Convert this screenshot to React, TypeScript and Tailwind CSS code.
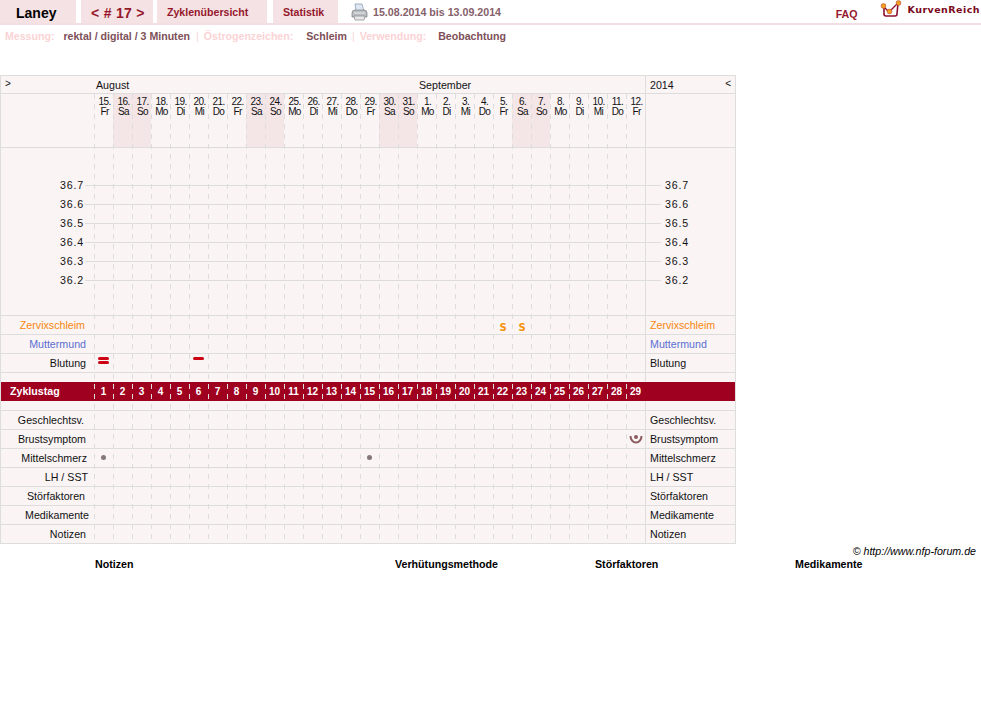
const dayNums = [15, 16, 17, 18, 19, 20, 21, 22, 23, 24, 25, 26, 27, 28, 29, 30, 31, 1, 2, 3, 4, 5, 6, 7, 8, 9, 10, 11, 12];
const weekNames = ['Fr', 'Sa', 'So', 'Mo', 'Di', 'Mi', 'Do'];
const days = dayNums.map((num, i) => ({ num, name: weekNames[i % 7], cycle: i + 1 }));
const temps = ['36.7', '36.6', '36.5', '36.4', '36.3', '36.2'];

function Printer() {
  return (
    <svg width="17" height="18" viewBox="0 0 17 18">
      <path d="M4 1 L11 1 L13 8 L5 8 Z" fill="#dfe8f2" stroke="#8a9db5" strokeWidth="0.8" />
      <path d="M1 10 Q1 7 4 7 L13 7 Q16 7 16 10 L16 14 L1 14 Z" fill="#b9bcc0" stroke="#85888c" strokeWidth="0.8" />
      <path d="M3 13 L14 13 L13 17 L4 17 Z" fill="#e8e8e8" stroke="#8f9296" strokeWidth="0.8" />
      <path d="M3 10 L14 10" stroke="#eceded" strokeWidth="1" />
    </svg>
  );
}

function Logo() {
  return (
    <svg width="22" height="18" viewBox="0 0 22 18">
      <path d="M4 7 L4 14 Q4 16 6 16 L15 16 Q17 16 17 14 L18 3" fill="none" stroke="#8c1030" strokeWidth="1.6" />
      <path d="M3 6 L9 12 L18 3" fill="none" stroke="#8c1030" strokeWidth="1.3" />
      <circle cx="3.5" cy="6" r="2.4" fill="#f5a023" stroke="#b5462a" strokeWidth="0.6" />
      <circle cx="9.5" cy="11.5" r="2.4" fill="#f5a023" stroke="#b5462a" strokeWidth="0.6" />
      <circle cx="18.5" cy="3" r="2.4" fill="#f5a023" stroke="#b5462a" strokeWidth="0.6" />
    </svg>
  );
}

function Spot() {
  return <div className="w-[5px] h-[5px] mt-[6px] rounded-full bg-[#85787a]" />;
}

function Period({ double }: { double?: boolean }) {
  return (
    <div className="flex flex-col items-center gap-[1px] pt-[3px]">
      <div className="w-[11px] h-[3px] rounded-full bg-[#cc0012]" />
      {double && <div className="w-[11px] h-[3px] rounded-full bg-[#cc0012]" />}
    </div>
  );
}

function Slime() {
  return <span className="pl-[1px] font-['DejaVu_Sans',sans-serif] text-[10px] leading-[23px] font-bold text-[#f7920f]">S</span>;
}

function Breast() {
  return (
    <svg width="14" height="12" viewBox="0 0 14 12" className="mt-[4px] ml-[1px]">
      <circle cx="7" cy="3" r="2" fill="#8a5a5e" />
      <path d="M1.5 2 A5.5 6.5 0 0 0 12.5 2" fill="none" stroke="#8a5a5e" strokeWidth="2" />
    </svg>
  );
}

// one table row: side labels plus 29 day cells
function Row({
  label,
  labelClass,
  rightClass,
  marks,
}: {
  label?: string;
  labelClass?: string;
  rightClass?: string;
  marks?: Record<number, React.ReactNode>;
}) {
  return (
    <div className="flex h-[19px] border-b border-[#dddddd]">
      <div className={`w-[93px] text-right leading-[19px] ${labelClass ?? ''}`}>{label}</div>
      {days.map((d) => (
        <div key={d.cycle} className="w-[19px] flex justify-center">
          {marks?.[d.cycle]}
        </div>
      ))}
      <div className={`flex-1 border-l border-[#dddddd] pl-[4px] leading-[19px] ${rightClass ?? ''}`}>{label}</div>
    </div>
  );
}

function Spacer({ className }: { className: string }) {
  return (
    <div className={`flex ${className}`}>
      <div className="w-[93px] shrink-0" />
      <div className="w-[551px] shrink-0" />
      <div className="flex-1 border-l border-[#dddddd]" />
    </div>
  );
}

function TempRow({ value }: { value: string }) {
  return (
    <div className="flex h-[19px] items-center">
      <div className="w-[93px] flex items-center justify-end">
        <span className="tracking-[0.8px] mr-[1px] pb-[2px]">{value}</span>
        <div className="w-[9px] h-px bg-[#dddddd]" />
      </div>
      <div className="w-[551px] h-px bg-[#dddddd]" />
      <div className="flex-1 h-full border-l border-[#dddddd] flex items-center">
        <div className="w-[15px] h-px bg-[#dddddd]" />
        <span className="tracking-[0.8px] ml-[4px] pb-[2px]">{value}</span>
      </div>
    </div>
  );
}

export default function App() {
  return (
    <div className="w-[981px] h-[703px] bg-white text-[10.67px] text-black font-['Liberation_Sans',Arial,sans-serif] overflow-hidden">
      {/* Top bar */}
      <div className="flex h-[25px] border-b-2 border-[#f3dfe2]">
        <div className="w-[76px] bg-[#f4e2e5] pl-[16px] text-[14px] font-bold leading-[27px]">Laney</div>
        <div className="w-[72px] ml-[5px] bg-[#f4e2e5] pl-[10px] text-[14px] font-bold leading-[26px] tracking-[0.3px] text-[#96182c]">{'< # 17 >'}</div>
        <div className="w-[110px] ml-[4px] bg-[#f4e2e5] pl-[10px] text-[10.6px] font-bold leading-[25px] text-[#96182c]">Zyklenübersicht</div>
        <div className="w-[65px] ml-[6px] bg-[#f4e2e5] pl-[10px] text-[10.6px] font-bold leading-[25px] text-[#96182c]">Statistik</div>
        <div className="ml-[13px] pt-[3px]"><Printer /></div>
        <div className="ml-[5px] font-bold leading-[25px] text-[#86606a]">15.08.2014 bis 13.09.2014</div>
        <div className="ml-auto font-bold leading-[28px] text-[#96182c]">FAQ</div>
        <div className="ml-[22px] w-[22px]"><Logo /></div>
        <div className="ml-[6px] mr-[1px] font-['DejaVu_Sans',sans-serif] text-[9.5px] font-bold leading-[20px] tracking-[0.45px] text-[#7a0a1c]">KurvenReich</div>
      </div>

      {/* Settings line */}
      <div className="flex pl-[5px] h-[50px] pt-[3px] text-[10.6px] font-bold leading-[16px] text-[#7d5058]">
        <span className="text-[#fad3d5]">Messung:</span>
        <span className="ml-[9px]">rektal / digital / 3 Minuten</span>
        <span className="ml-[6px] font-normal text-[#fad3d5]">|</span>
        <span className="ml-[5px] text-[#fad3d5]">Östrogenzeichen:</span>
        <span className="ml-[13px]">Schleim</span>
        <span className="ml-[5px] font-normal text-[#fad3d5]">|</span>
        <span className="ml-[5px] text-[#fad3d5]">Verwendung:</span>
        <span className="ml-[12px]">Beobachtung</span>
      </div>

      {/* Chart table */}
      <div className="relative w-[736px] bg-[#faf4f5] border-x border-t border-[#dddddd] text-[#111111]">
        <div className="flex h-[18px] border-b border-[#dddddd] leading-[19px]">
          <div className="w-[93px] pl-[4px] text-[10px] leading-[16px]">{'>'}</div>
          <div className="w-[323px] pl-[2px]">August</div>
          <div className="w-[228px] pl-[2px]">September</div>
          <div className="flex-1 flex justify-between border-l border-[#dddddd] pl-[4px] pr-[4px]">
            <span>2014</span>
            <span className="text-[10px] leading-[16px]">{'<'}</span>
          </div>
        </div>

        <div className="flex h-[54px] border-b border-[#dddddd]">
          <div className="w-[93px]" />
          {days.map((d) => (
            <div
              key={d.cycle}
              className={`w-[19px] pt-[3px] pl-[2px] text-center text-[10px] leading-[9.5px] tracking-[-0.6px] ${d.name === 'Sa' || d.name === 'So' ? 'bg-[#f4e5e7]' : ''}`}
            >
              <div>{d.num}.</div>
              <div>{d.name}</div>
            </div>
          ))}
          <div className="flex-1 border-l border-[#dddddd]" />
        </div>

        {/* Temperature area */}
        <div className="border-b border-[#dddddd]">
          <Spacer className="h-[28px]" />
          {temps.map((t) => (
            <TempRow key={t} value={t} />
          ))}
          <Spacer className="h-[25px]" />
        </div>

        <Row label="Zervixschleim" labelClass="pr-[9px] text-[#f7870f]" rightClass="text-[#f7870f]" marks={{ 22: <Slime />, 23: <Slime /> }} />
        <Row label="Muttermund" labelClass="pr-[8px] text-[#5a6fd0]" rightClass="text-[#5a6fd0]" />
        <Row label="Blutung" labelClass="pr-[8px]" marks={{ 1: <Period double />, 6: <Period /> }} />
        <Spacer className="h-[9px]" />

        {/* Cycle day bar */}
        <div className="flex h-[19px] bg-[#a00020] text-white font-bold leading-[19px]">
          <div className="w-[93px] pl-[9px]">Zyklustag</div>
          {days.map((d) => (
            <div key={d.cycle} className="w-[19px] text-center text-[10px]">
              {d.cycle}
            </div>
          ))}
          <div className="flex-1" />
        </div>
        <div className="border-b border-[#dddddd]">
          <Spacer className="h-[9px]" />
        </div>

        <Row label="Geschlechtsv." labelClass="pr-[10px]" />
        <Row label="Brustsymptom" labelClass="pr-[8px]" marks={{ 29: <Breast /> }} />
        <Row label="Mittelschmerz" labelClass="pr-[7px]" marks={{ 1: <Spot />, 15: <Spot /> }} />
        <Row label="LH / SST" labelClass="pr-[6px]" />
        <Row label="Störfaktoren" labelClass="pr-[9px]" />
        <Row label="Medikamente" labelClass="pr-[5px]" />
        <Row label="Notizen" labelClass="pr-[8px]" />

        {/* Dashed day lines laid over the rows */}
        <div className="absolute left-[93px] top-[18px] bottom-0 flex pointer-events-none">
          {days.map((d) => (
            <div
              key={d.cycle}
              className="w-[19px] h-full bg-[linear-gradient(#dddddd_50%,transparent_50%)] bg-[length:1px_10px] bg-repeat-y"
            />
          ))}
        </div>
      </div>

      {/* Footer */}
      <div className="pr-[5px] text-right italic leading-[14px]">© http://www.nfp-forum.de</div>
      <div className="flex pl-[95px] font-bold leading-[12px]">
        <div className="w-[300px]">Notizen</div>
        <div className="w-[200px]">Verhütungsmethode</div>
        <div className="w-[200px]">Störfaktoren</div>
        <div>Medikamente</div>
      </div>
    </div>
  );
}
